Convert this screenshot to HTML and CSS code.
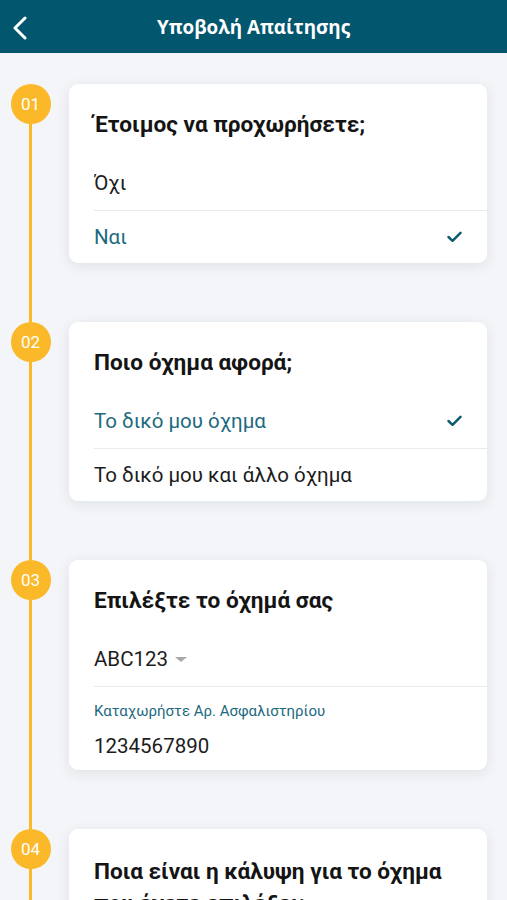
FILE: index.html
```html
<!DOCTYPE html>
<html lang="el">
<head>
<meta charset="utf-8">
<title>Υποβολή Απαίτησης</title>
<link rel="stylesheet" href="styles.css">
</head>
<body>
<header class="topbar">
  <button class="back" aria-label="Πίσω">
    <svg width="18" height="24" viewBox="0 0 18 24"><path d="M14 2 L4 12 L14 22" fill="none" stroke="#fff" stroke-width="3" stroke-linecap="round" stroke-linejoin="round"/></svg>
  </button>
  <h1 class="title">Υποβολή Απαίτησης</h1>
</header>
<main class="steps">
  <section class="step">
    <div class="marker"><span class="num">01</span><span class="line"></span></div>
    <div class="card">
      <h2 class="q">Έτοιμος να προχωρήσετε;</h2>
      <ul class="opts">
        <li class="opt">Όχι</li>
        <li class="opt sel">Ναι<svg class="check" width="15" height="12" viewBox="0 0 15 12"><path d="M1.5 6 L5.5 9.8 L13.5 1.8" fill="none" stroke="#0f5a70" stroke-width="2.5" stroke-linecap="round" stroke-linejoin="round"/></svg></li>
      </ul>
    </div>
  </section>
  <section class="step">
    <div class="marker"><span class="num">02</span><span class="line"></span></div>
    <div class="card">
      <h2 class="q">Ποιο όχημα αφορά;</h2>
      <ul class="opts">
        <li class="opt sel">Το δικό μου όχημα<svg class="check" width="15" height="12" viewBox="0 0 15 12"><path d="M1.5 6 L5.5 9.8 L13.5 1.8" fill="none" stroke="#0f5a70" stroke-width="2.5" stroke-linecap="round" stroke-linejoin="round"/></svg></li>
        <li class="opt">Το δικό μου και άλλο όχημα</li>
      </ul>
    </div>
  </section>
  <section class="step">
    <div class="marker"><span class="num">03</span><span class="line"></span></div>
    <div class="card">
      <h2 class="q">Επιλέξτε το όχημά σας</h2>
      <ul class="opts">
        <li class="opt">ABC123<span class="caret"></span></li>
      </ul>
      <div class="field">
        <label class="flabel">Καταχωρήστε Αρ. Ασφαλιστηρίου</label>
        <div class="fvalue">1234567890</div>
      </div>
    </div>
  </section>
  <section class="step">
    <div class="marker"><span class="num">04</span><span class="line"></span></div>
    <div class="card">
      <h2 class="q">Ποια είναι η κάλυψη για το όχημα που έχετε επιλέξει;</h2>
    </div>
  </section>
</main>
</body>
</html>
```
FILE: styles.css
```css
* { box-sizing: border-box; }
html, body { margin: 0; padding: 0; }
body {
  background: #f3f5f8;
  font-family: Roboto, "Noto Sans", sans-serif;
  color: #161616;
  overflow: hidden;
  height: 900px;
}
.topbar {
  height: 53px;
  background: #02566e;
  display: flex;
  align-items: center;
  justify-content: center;
  position: relative;
}
.back {
  position: absolute;
  left: 9px;
  top: 15px;
  background: none;
  border: 0;
  padding: 0;
  width: 22px;
  height: 26px;
  display: flex;
  align-items: center;
  justify-content: center;
}
.title {
  margin: 0;
  color: #fff;
  font-family: "Open Sans", "Noto Sans", sans-serif;
  font-weight: 700;
  font-size: 18.8px;
  letter-spacing: 0;
}
.steps {
  padding-top: 31px;
}
.step {
  display: flex;
  align-items: stretch;
}
.marker {
  width: 69px;
  flex: none;
  display: flex;
  flex-direction: column;
  align-items: center;
  padding-right: 8px;
}
.num {
  width: 40px;
  height: 40px;
  border-radius: 50%;
  background: #fbb829;
  color: #fff;
  font-size: 17px;
  display: flex;
  align-items: center;
  justify-content: center;
  flex: none;
}
.line {
  width: 3px;
  flex: 1;
  background: #fbb829;
}
.card {
  flex: 1;
  margin: 0 20px 59px 0;
  background: #fff;
  border-radius: 9px;
  box-shadow: 0 3px 14px rgba(30, 40, 60, 0.09);
  padding: 27px 0 0 25px;
  min-height: 100px;
}
.q {
  margin: 0 0 17px 0;
  font-size: 22.6px;
  line-height: 28px;
  font-weight: 700;
  color: #141414;
  padding-right: 20px;
}
.step:last-child .q { line-height: 32px; }
.opts {
  list-style: none;
  margin: 0;
  padding: 0;
}
.opt {
  height: 53px;
  display: flex;
  align-items: center;
  font-size: 20.5px;
  color: #1c1c1c;
  border-top: 1px solid #e8eaec;
  padding-right: 25px;
}
.opt:first-child { border-top: 0; height: 54px; }
.opt.sel { color: #1d6a80; justify-content: space-between; }
.check { flex: none; }
.caret {
  width: 0; height: 0;
  margin-left: 7px;
  border-left: 6px solid transparent;
  border-right: 6px solid transparent;
  border-top: 5px solid #a8a8a8;
}
.field {
  border-top: 1px solid #e8eaec;
  padding: 14px 0 12px 0;
}
.flabel {
  display: block;
  font-size: 15px;
  line-height: 20px;
  color: #1d6a80;
  margin-bottom: 13px;
}
.fvalue {
  font-size: 20.5px;
  line-height: 24px;
  color: #1c1c1c;
}
```
